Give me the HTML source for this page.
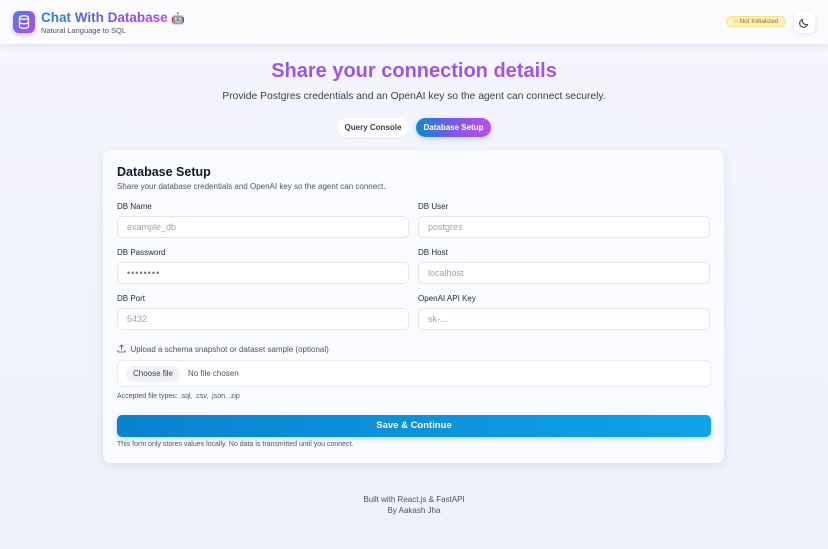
<!DOCTYPE html>
<html><head><meta charset="utf-8"><style>
*{box-sizing:border-box;margin:0;padding:0}
body{width:828px;height:549px;overflow:hidden;background:linear-gradient(180deg,#f5f6fc,#eef1fa);font-family:"Liberation Sans",sans-serif;color:#111827;position:relative}
.hdr{position:absolute;left:0;top:0;width:828px;height:44px;background:#fbfbfe;box-shadow:0 2px 6px rgba(120,120,180,.15)}
.logo{position:absolute;left:13px;top:11px;width:22px;height:22px;border-radius:6px;background:linear-gradient(135deg,#4f7ce8,#b349e6);box-shadow:0 2px 5px rgba(120,80,220,.35)}
.t1{position:absolute;left:41px;top:10px;font-size:13.5px;font-weight:bold;background:linear-gradient(90deg,#1a86d8,#8d4de8 60%,#c24be0);-webkit-background-clip:text;color:transparent}
.t2{position:absolute;left:41px;top:26px;font-size:7.5px;color:#4b5563}
.badge{position:absolute;left:726px;top:16px;width:60px;height:11px;border-radius:6px;background:#fdf1c0;border:1px solid #f5e08a;font-size:6.5px;color:#92700b;text-align:center;line-height:9px}
.moon{position:absolute;left:794px;top:12px;width:21px;height:21px;border-radius:5px;background:#fff;box-shadow:0 1px 4px rgba(0,0,0,.1)}
h1{position:absolute;left:0;width:828px;top:60px;text-align:center;font-size:20px;font-weight:bold;background:linear-gradient(90deg,#8e58e8,#b24fe6);-webkit-background-clip:text;color:transparent;}
.sub{position:absolute;left:0;width:828px;top:91px;text-align:center;font-size:10.3px;color:#374151}
.tab{position:absolute;top:118px;height:19px;border-radius:10px;font-size:8px;font-weight:bold;line-height:19px;text-align:center}
.card{position:absolute;left:103px;top:150px;width:621px;height:313px;background:#fafbfe;border-radius:8px;box-shadow:0 2px 10px rgba(100,110,160,.15)}
.abs{position:absolute}
.lbl{font-size:8px;color:#1f2937}
.in{position:absolute;width:292px;height:22px;border:1px solid #e2e5ec;border-radius:5px;background:#fff;font-size:9px;color:#9ca3af;padding-left:9px;line-height:20px}
</style></head><body>
<div class="hdr">
<div class="logo"><svg width="22" height="22" viewBox="0 0 22 22"><g fill="none" stroke="#fff" stroke-width="1.3"><ellipse cx="11" cy="6.5" rx="4.5" ry="1.8"/><path d="M6.5 6.5v9c0 1 2 1.8 4.5 1.8s4.5-.8 4.5-1.8v-9M6.5 11c0 1 2 1.8 4.5 1.8s4.5-.8 4.5-1.8"/></g></svg></div>
<div class="t1">Chat With Database <span style="-webkit-text-fill-color:initial;color:#555;font-size:11px">🤖</span></div>
<div class="t2">Natural Language to SQL</div>
<div class="badge">○ Not Initialized</div>
<div class="moon"><svg width="21" height="21" viewBox="0 0 21 21"><path d="M13.5 12.5a4 4 0 0 1-5-5 4 4 0 1 0 5 5z" fill="none" stroke="#374151" stroke-width="1.1"/></svg></div>
</div>
<h1>Share your connection details</h1>
<div class="sub">Provide Postgres credentials and an OpenAI key so the agent can connect securely.</div>
<div class="tab" style="left:337px;width:72px;background:#fff;color:#374151;box-shadow:0 1px 3px rgba(0,0,0,.06)">Query Console</div>
<div class="tab" style="left:416px;width:75px;background:linear-gradient(90deg,#0a8ad4,#7a5ae6,#c04de4);color:#fff;box-shadow:0 2px 6px rgba(60,150,230,.35)">Database Setup</div>
<div class="card">
<div class="abs" style="left:14px;top:15px;font-size:12.5px;font-weight:bold">Database Setup</div>
<div class="abs" style="left:14px;top:32px;font-size:8px;color:#4b5563">Share your database credentials and OpenAI key so the agent can connect.</div>
<div class="abs lbl" style="left:14px;top:52px">DB Name</div><div class="abs lbl" style="left:315px;top:52px">DB User</div>
<div class="in" style="left:14px;top:66px">example_db</div><div class="in" style="left:315px;top:66px">postgres</div>
<div class="abs lbl" style="left:14px;top:98px">DB Password</div><div class="abs lbl" style="left:315px;top:98px">DB Host</div>
<div class="in" style="left:14px;top:112px;color:#6b7280;letter-spacing:1px">••••••••</div><div class="in" style="left:315px;top:112px">localhost</div>
<div class="abs lbl" style="left:14px;top:144px">DB Port</div><div class="abs lbl" style="left:315px;top:144px">OpenAI API Key</div>
<div class="in" style="left:14px;top:158px">5432</div><div class="in" style="left:315px;top:158px">sk-...</div>
<div class="abs" style="left:14px;top:194px;font-size:8px;color:#4b5563"><svg width="9" height="9" viewBox="0 0 9 9" style="vertical-align:-1px"><path d="M4.5 6V1M2.5 3l2-2 2 2M1 6v2h7V6" fill="none" stroke="#4b5563" stroke-width=".8"/></svg>&nbsp; Upload a schema snapshot or dataset sample (optional)</div>
<div class="abs" style="left:14px;top:210px;width:594px;height:27px;border:1px solid #e8ebf0;border-radius:5px;background:#fff"><span class="abs" style="left:8px;top:5px;width:54px;height:16px;border-radius:8px;background:#f0f2f6;font-size:8px;line-height:16px;text-align:center;color:#374151">Choose file</span><span class="abs" style="left:70px;top:8px;font-size:8px;color:#4b5563">No file chosen</span></div>
<div class="abs" style="left:14px;top:243px;font-size:7px;color:#4b5563">Accepted file types: .sql, .csv, .json, .zip</div>
<div class="abs" style="left:14px;top:265px;width:594px;height:22px;border-radius:5px;background:linear-gradient(90deg,#0a82cc,#10a3e6);color:#fff;font-size:9.5px;font-weight:bold;text-align:center;line-height:22px;box-shadow:0 2px 6px rgba(20,150,230,.3)">Save &amp; Continue</div>
<div class="abs" style="left:14px;top:291px;font-size:7px;color:#4b5563">This form only stores values locally. No data is transmitted until you connect.</div>
</div>
<div class="abs" style="left:0;width:828px;top:494px;text-align:center;font-size:8px;color:#4b5563;line-height:11px">Built with React.js &amp; FastAPI<br>By Aakash Jha</div>
</body></html>
